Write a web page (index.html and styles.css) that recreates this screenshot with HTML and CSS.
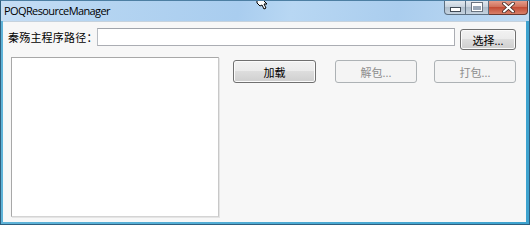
FILE: index.html
```html
<!DOCTYPE html>
<html>
<head>
<meta charset="utf-8">
<link rel="stylesheet" href="styles.css">
</head>
<body>
<div class="window">
  <div class="titlebar">
    <div class="title">POQResourceManager</div>
    <div class="caption">
      <div class="cap cap-min"><span class="min-glyph"></span></div>
      <div class="cap cap-max"><span class="max-glyph"></span></div>
      <div class="cap cap-close">
        <svg width="13" height="11" viewBox="0 0 13 11"><path d="M2 1.5 L11 9.5 M11 1.5 L2 9.5" stroke="#3a2420" stroke-width="3.6" stroke-linecap="round"/><path d="M2 1.5 L11 9.5 M11 1.5 L2 9.5" stroke="#ffffff" stroke-width="2" stroke-linecap="round"/></svg>
      </div>
    </div>
  </div>
  <div class="client">
    <div class="row1">
      <div class="label">秦殇主程序路径：</div>
      <div class="textbox"></div>
      <div class="btn btn-choose">选择...</div>
    </div>
    <div class="row2">
      <div class="listbox"></div>
      <div class="btn btn-act btn-load">加载</div>
      <div class="btn btn-act btn-disabled btn-unpack">解包...</div>
      <div class="btn btn-act btn-disabled btn-pack">打包...</div>
    </div>
  </div>
  <svg class="cursor" width="12" height="10" viewBox="0 0 12 10"><path d="M1 0 L1 3 L4 6 L6 5 L8 9 L10 8 L8 4 L11 4 L7 0 Z" fill="#fff" stroke="#000" stroke-width="1"/></svg>
</div>
</body>
</html>
```
FILE: styles.css
```css
html, body {
  margin: 0;
  padding: 0;
  background: #ffffff;
}
.window {
  position: relative;
  width: 530px;
  height: 225px;
  box-sizing: border-box;
  display: flex;
  flex-direction: column;
  background: linear-gradient(90deg, #5fb3d8, #3ea3cf);
  border: 1px solid #2f5f7e;
  border-top-color: #4d7fa3;
  overflow: hidden;
  font-family: "Noto Sans", "Noto Sans CJK SC", sans-serif;
}
.titlebar {
  height: 20px;
  flex: none;
  display: flex;
  justify-content: space-between;
  align-items: flex-start;
  background: linear-gradient(100deg, #c6def5 0%, #b4d4f1 20%, #a9cdef 45%, #b8d7f3 55%, #aacdee 75%, #c0dbf3 100%);
}
.title {
  font-family: "Open Sans", sans-serif;
  font-size: 11px;
  color: #000;
  margin-left: 3px;
  line-height: 20px;
  letter-spacing: -0.6px;
}
.caption {
  display: flex;
  margin-right: 1px;
  margin-top: -1px;
}
.cap {
  height: 15px;
  box-sizing: border-box;
  border: 1px solid #5d6f80;
  border-top: none;
  display: flex;
  align-items: center;
  justify-content: center;
}
.cap-min {
  width: 22px;
  border-radius: 0 0 0 4px;
  background: linear-gradient(#e6ecf2, #c6d2de 50%, #aebdcb 51%, #c5d3e0);
}
.cap-max {
  width: 23px;
  border-left: none;
  background: linear-gradient(#e6ecf2, #c6d2de 50%, #aebdcb 51%, #c5d3e0);
}
.cap-close {
  width: 39px;
  border-left: none;
  border-color: #6b3a30;
  border-radius: 0 0 4px 0;
  background: linear-gradient(#e8a493, #d0705a 50%, #c24a33 51%, #d8806a);
}
.min-glyph {
  width: 9px;
  height: 3px;
  margin-top: 4px;
  background: #fff;
  border: 1px solid #404a55;
}
.max-glyph {
  width: 8px;
  height: 6px;
  border: 1px solid #fff;
  outline: 1px solid #6a7480;
  box-shadow: inset 0 2px 0 #fff;
  background: #9aa8b8;
}
.client {
  flex: 1;
  margin: 0 3px 2px 2px;
  background: #f7f7f7;
  border-top: 1px solid #c6d2dd;
  padding: 6px 10px 5px 5px;
  display: flex;
  flex-direction: column;
}
.row1 {
  display: flex;
  align-items: flex-start;
}
.label {
  width: 89px;
  flex: none;
  font-size: 11px;
  line-height: 16px;
  margin-top: 2px;
  color: #000;
  white-space: nowrap;
  letter-spacing: 0.2px;
}
.textbox {
  width: 358px;
  height: 18px;
  box-sizing: border-box;
  background: #fff;
  border: 1px solid #abadb3;
  border-top-color: #a0a4ab;
  border-left-color: #b8bcc2;
}
.btn {
  box-sizing: border-box;
  border: 1px solid #707070;
  border-radius: 3px;
  background: linear-gradient(#f2f2f2 0%, #ebebeb 49%, #dddddd 50%, #cfcfcf 100%);
  box-shadow: inset 0 0 0 1px #fbfbfb;
  font-size: 11px;
  color: #000;
  display: flex;
  align-items: center;
  justify-content: center;
  flex: none;
}
.btn-choose {
  width: 56px;
  height: 21px;
  margin-left: 5px;
  margin-top: 1px;
}
.row2 {
  display: flex;
  align-items: flex-start;
  margin-top: 7px;
  flex: 1;
}
.listbox {
  width: 208px;
  height: 160px;
  margin-left: 3px;
  box-sizing: border-box;
  background: #fff;
  border: 1px solid #a8a8a8;
  border-right-color: #c8c8c8;
  border-bottom-color: #d4d4d4;
  box-shadow: 1px 1px 0 #e4e4e4;
  flex: none;
}
.btn-act {
  width: 83px;
  height: 23px;
  margin-top: 3px;
}
.btn-load {
  margin-left: 14px;
}
.btn-unpack {
  margin-left: 19px;
  width: 82px;
}
.btn-pack {
  margin-left: 17px;
  width: 82px;
}
.btn-disabled {
  border-color: #adb2b5;
  background: #f4f4f4;
  box-shadow: none;
  color: #8d8d8d;
}
.cursor {
  position: absolute;
  left: 255px;
  top: -1px;
}
```
